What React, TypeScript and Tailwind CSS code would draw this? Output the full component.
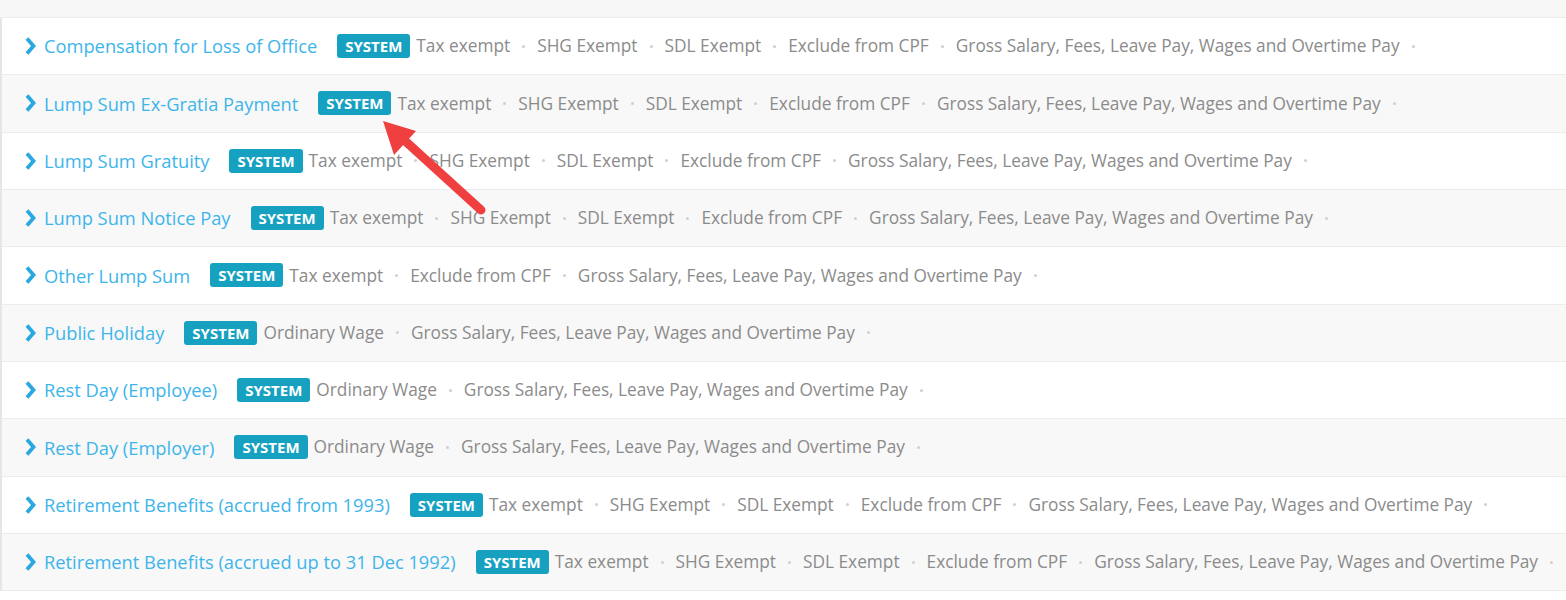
type PayItem = {
  name: string;
  tags: string[];
};

const GROSS = "Gross Salary, Fees, Leave Pay, Wages and Overtime Pay";
const EXEMPT = ["Tax exempt", "SHG Exempt", "SDL Exempt", "Exclude from CPF", GROSS];

const items: PayItem[] = [
  { name: "Compensation for Loss of Office", tags: EXEMPT },
  { name: "Lump Sum Ex-Gratia Payment", tags: EXEMPT },
  { name: "Lump Sum Gratuity", tags: EXEMPT },
  { name: "Lump Sum Notice Pay", tags: EXEMPT },
  { name: "Other Lump Sum", tags: ["Tax exempt", "Exclude from CPF", GROSS] },
  { name: "Public Holiday", tags: ["Ordinary Wage", GROSS] },
  { name: "Rest Day (Employee)", tags: ["Ordinary Wage", GROSS] },
  { name: "Rest Day (Employer)", tags: ["Ordinary Wage", GROSS] },
  { name: "Retirement Benefits (accrued from 1993)", tags: EXEMPT },
  { name: "Retirement Benefits (accrued up to 31 Dec 1992)", tags: EXEMPT },
];

function Chevron() {
  return (
    <svg width="12" height="20" viewBox="0 0 12 20" className="shrink-0">
      <polyline
        points="3,2.5 9.5,10 3,17.5"
        fill="none"
        stroke="#2aa8e0"
        strokeWidth="3.8"
        strokeLinejoin="miter"
      />
    </svg>
  );
}

function PayItemRow({ item, index }: { item: PayItem; index: number }) {
  return (
    <div
      className={`flex h-[57.33px] items-center overflow-hidden whitespace-nowrap border-b border-[#ececec] pl-[22px] ${
        index % 2 === 0 ? "bg-white" : "bg-[#f8f8f8]"
      }`}
    >
      <Chevron />
      <span className="ml-[8px] shrink-0 text-[18.3px] text-[#3db5ea]">{item.name}</span>
      <span className="ml-[20px] shrink-0 rounded-[3px] bg-[#17a1c1] px-[8px] py-[3px] text-[15px] font-bold leading-[18px] text-white">
        SYSTEM
      </span>
      <div className="ml-[6px] flex shrink-0 items-center text-[17.3px] text-[#8b8b8b]">
        {item.tags.map((tag) => (
          <div key={tag} className="flex shrink-0 items-center">
            <span>{tag}</span>
            <span className="mx-[12px] h-[3px] w-[3px] rounded-full bg-[#cfcfcf]" />
          </div>
        ))}
      </div>
    </div>
  );
}

export default function App() {
  return (
    <div className="relative h-[600px] w-[1566px] overflow-hidden bg-white font-['Open_Sans',sans-serif]">
      <div className="h-[18px] border-b border-[#ececec] bg-[#f7f7f7]" />
      <div className="border-l-2 border-[#e6e6e6]">
        {items.map((item, i) => (
          <PayItemRow key={item.name} item={item} index={i} />
        ))}
      </div>

      {/* red callout arrow pointing at the badge */}
      <svg
        className="pointer-events-none absolute left-0 top-0"
        width="1566"
        height="600"
        viewBox="0 0 1566 600"
      >
        <line x1="481" y1="210" x2="403" y2="139" stroke="#ef3f3f" strokeWidth="9" strokeLinecap="round" />
        <polygon points="383,121 416,131 394,155" fill="#ef3f3f" />
      </svg>
    </div>
  );
}
